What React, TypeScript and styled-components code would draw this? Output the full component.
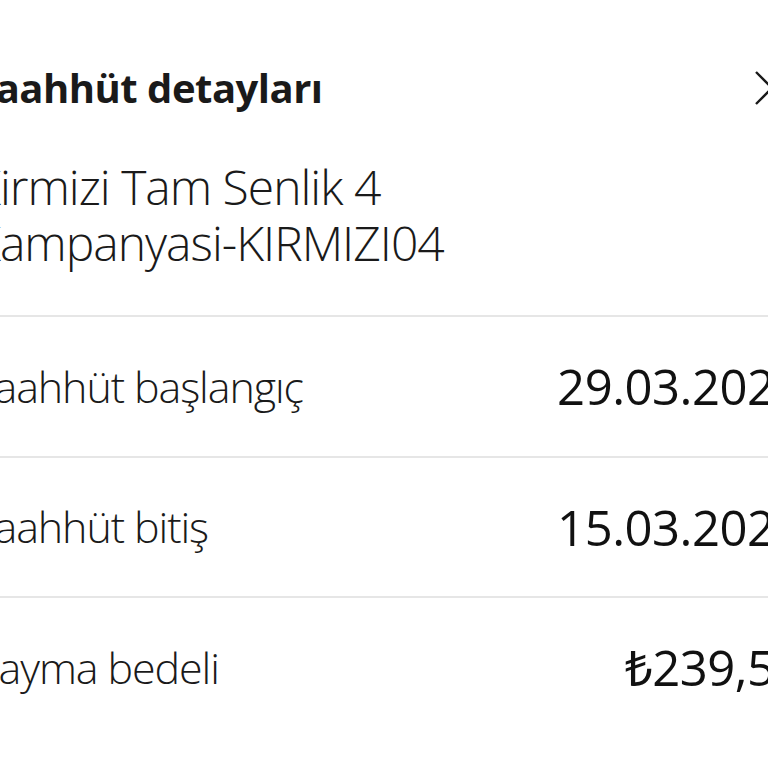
import React from "react";
import styled, { createGlobalStyle } from "styled-components";

const GlobalStyle = createGlobalStyle`
  html, body { margin: 0; padding: 0; background: #ffffff; }
  * { box-sizing: border-box; }
`;

const Viewport = styled.div`
  width: 768px;
  height: 768px;
  overflow: hidden;
  background: #ffffff;
  font-family: "Open Sans", "Noto Sans", sans-serif;
  color: #1a1a1a;
`;

const Sheet = styled.div`
  margin-left: -27px;
  width: 848px;
  padding-top: 58px;
`;

const Header = styled.div`
  display: flex;
  justify-content: space-between;
  align-items: center;
  height: 60px;
`;

const Title = styled.h2`
  margin: 0;
  font-size: 40px;
  font-weight: 700;
  line-height: 60px;
  letter-spacing: -0.5px;
`;

const CloseButton = styled.button`
  border: 0;
  background: transparent;
  padding: 0;
  margin-right: 31px;
  width: 36px;
  height: 36px;
  display: flex;
  align-items: center;
  justify-content: center;
`;

const Subtitle = styled.p`
  margin: 0;
  padding: 41px 0 44px;
  font-size: 48px;
  font-weight: 300;
  line-height: 56px;
  letter-spacing: -1px;
  max-width: 520px;
`;

const Row = styled.div`
  display: flex;
  justify-content: space-between;
  align-items: center;
  height: 140.5px;
  border-top: 2px solid #e6e6e6;
  padding-right: 19px;
`;

const Label = styled.span`
  font-size: 43px;
  font-weight: 300;
  letter-spacing: -1.1px;
`;

const Value = styled.span`
  font-size: 49px;
  font-weight: 400;
  letter-spacing: -0.5px;
  color: #111;
`;

const rows = [
  { label: "Taahhüt başlangıç", value: "29.03.2024" },
  { label: "Taahhüt bitiş", value: "15.03.2025" },
  { label: "Cayma bedeli", value: "₺239,50" },
];

export default function App() {
  return (
    <>
      <GlobalStyle />
      <Viewport>
        <Sheet>
          <Header>
            <Title>Taahhüt detayları</Title>
            <CloseButton aria-label="Kapat">
              <svg width="34" height="34" viewBox="0 0 34 34" fill="none">
                <path d="M1 1 L33 33 M33 1 L1 33" stroke="#1a1a1a" strokeWidth="2.4" />
              </svg>
            </CloseButton>
          </Header>
          <Subtitle>Kirmizi Tam Senlik 4 Kampanyasi-KIRMIZI04</Subtitle>
          {rows.map((r) => (
            <Row key={r.label}>
              <Label>{r.label}</Label>
              <Value>{r.value}</Value>
            </Row>
          ))}
        </Sheet>
      </Viewport>
    </>
  );
}
